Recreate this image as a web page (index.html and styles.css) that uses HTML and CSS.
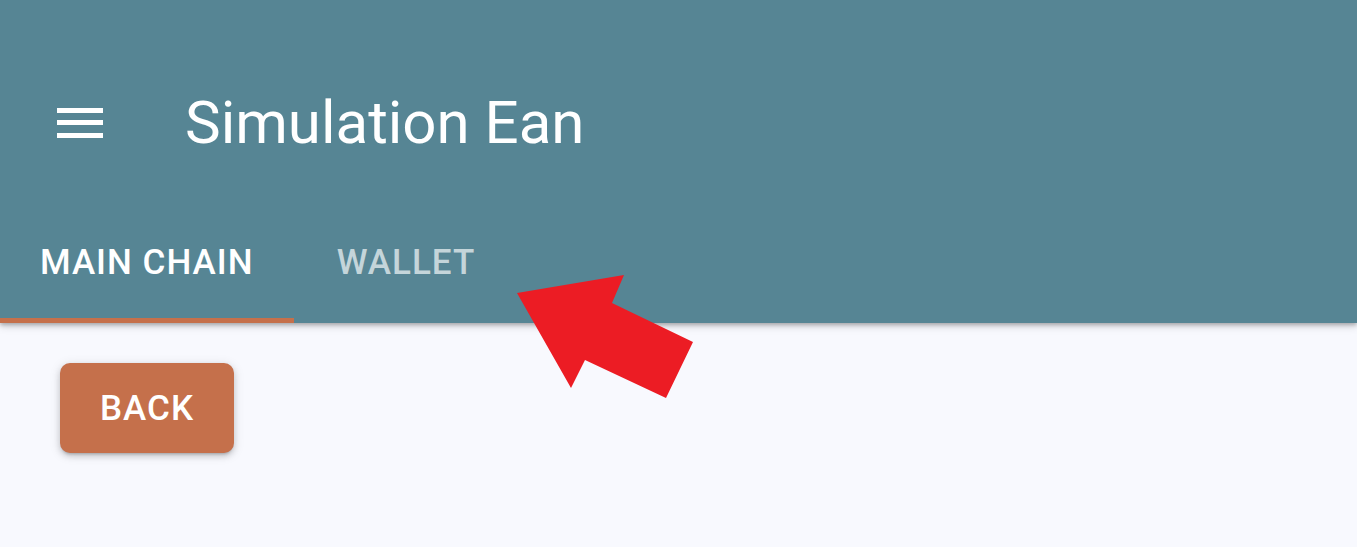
FILE: index.html
```html
<!DOCTYPE html>
<html lang="en">
<head>
<meta charset="utf-8">
<title>Simulation Ean</title>
<link rel="stylesheet" href="styles.css">
</head>
<body>
<header class="appbar">
  <div class="toolbar">
    <button class="menu-btn" aria-label="menu">
      <svg width="46" height="30" viewBox="0 0 46 30"><rect x="0" y="0" width="46" height="5" fill="#fff"/><rect x="0" y="12" width="46" height="5" fill="#fff"/><rect x="0" y="25" width="46" height="5" fill="#fff"/></svg>
    </button>
    <h1 class="title">Simulation Ean</h1>
  </div>
  <nav class="tabs">
    <div class="tab active">MAIN CHAIN</div>
    <div class="tab">WALLET</div>
  </nav>
</header>
<main class="content">
  <button class="back-btn">BACK</button>
</main>
<svg class="arrow" width="1357" height="547" viewBox="0 0 1357 547"><polygon points="517,293 624,275 612,303 693,342 666,398 585,360 571,388" fill="#ec1c24"/></svg>
</body>
</html>
```

FILE: styles.css
```css
html, body {
  margin: 0;
  padding: 0;
}
body {
  background: #f8f9fe;
  font-family: Roboto, "Liberation Sans", sans-serif;
  height: 547px;
  overflow: hidden;
  position: relative;
}
.appbar {
  background: #568594;
  color: #fff;
  box-shadow: 0 2px 4px rgba(0,0,0,0.25), 0 4px 8px rgba(0,0,0,0.12);
  position: relative;
  z-index: 1;
}
.toolbar {
  height: 203px;
  box-sizing: border-box;
  padding-top: 43px;
  display: flex;
  align-items: center;
}
.menu-btn {
  background: none;
  border: 0;
  padding: 0;
  margin-left: 57px;
  width: 46px;
  height: 30px;
  display: flex;
}
.title {
  margin: 0 0 0 82px;
  font-size: 60px;
  font-weight: 400;
  line-height: 1;
}
.tabs {
  display: flex;
  height: 120px;
}
.tab {
  min-width: 225px;
  padding: 4px 40px 5px;
  box-sizing: border-box;
  display: flex;
  align-items: center;
  justify-content: center;
  font-size: 35px;
  font-weight: 500;
  letter-spacing: 1px;
  color: rgba(255,255,255,0.66);
}
.tab.active {
  color: #fff;
  border-bottom: 5px solid #c5704b;
  padding-bottom: 0;
}
.content {
  padding: 40px 60px;
}
.back-btn {
  width: 174px;
  height: 90px;
  border: 0;
  border-radius: 10px;
  background: #c5704b;
  color: #fff;
  font-family: Roboto, "Liberation Sans", sans-serif;
  font-size: 35px;
  font-weight: 500;
  letter-spacing: 1px;
  box-shadow: 0 3px 3px -2px rgba(0,0,0,0.2), 0 3px 6px rgba(0,0,0,0.14), 0 2px 12px rgba(0,0,0,0.12);
}
.arrow {
  position: absolute;
  left: 0;
  top: 0;
  z-index: 2;
  pointer-events: none;
}
```
